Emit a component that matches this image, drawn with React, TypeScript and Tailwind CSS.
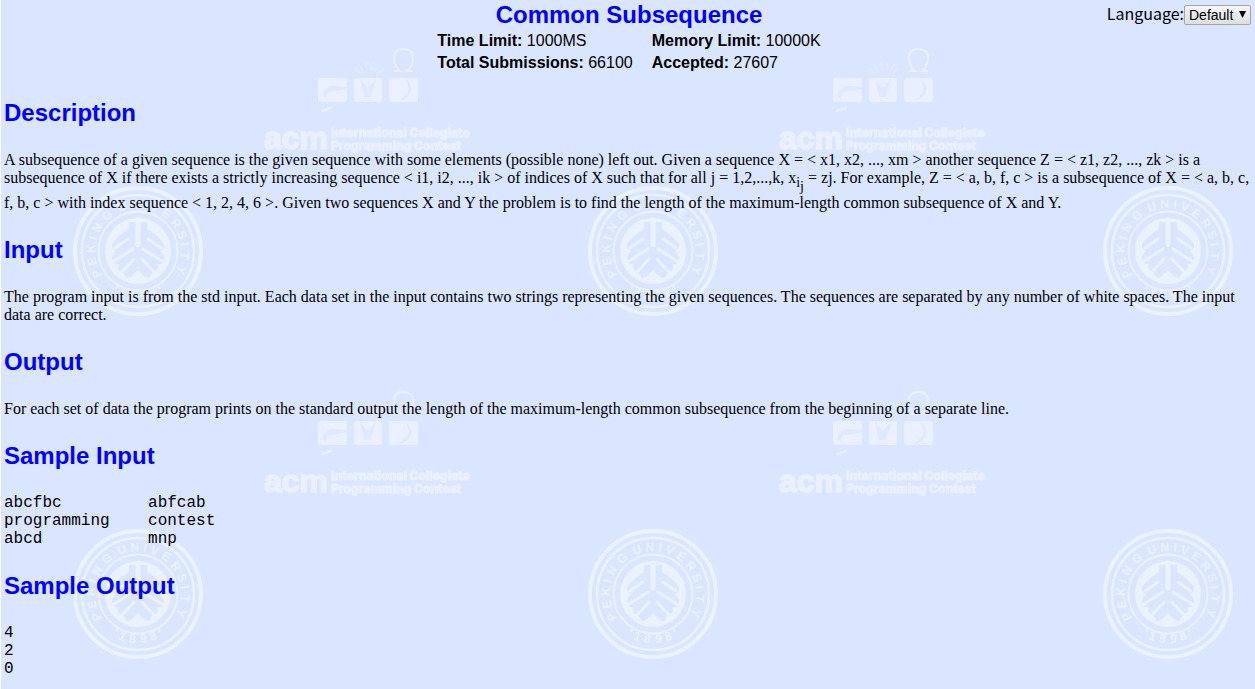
import type { ReactNode } from "react";

const sealLetters: [string, number][] = [
  ["P", -119], ["E", -103], ["K", -87], ["I", -74], ["N", -60], ["G", -41],
  ["U", -20], ["N", -4], ["I", 9], ["V", 21], ["E", 37], ["R", 54],
  ["S", 70], ["I", 82], ["T", 96], ["Y", 114],
];

const sealYear: [string, number][] = [
  ["'", 30], ["1", 20], ["8", 7], ["9", -7], ["8", -20], ["'", -30],
];

function Seal() {
  return (
    <g transform="translate(137 251)">
      <g fill="none" stroke="#ebf2ff">
        <circle r="63" strokeWidth="4" />
        <circle r="56" strokeWidth="2.4" />
        <circle r="39.5" strokeWidth="1.8" />
      </g>
      <circle r="33" fill="#ebf2ff" />
      <path
        d="M0 -29 H-9 V-22 Q-19 -16 -26 -7 Q-27 -2 -22 0 Q-28 6 -25 11 Q-23 14 -19 13 Q-22 19 -16 20 L-11 27 Q-8 28 0 19 Q8 28 11 27 L16 20 Q22 19 19 13 Q23 14 25 11 Q28 6 22 0 Q27 -2 26 -7 Q19 -16 9 -22 V-29 Z"
        fill="#dae5ff"
      />
      <g fill="none" stroke="#ebf2ff" strokeWidth="3" strokeLinecap="round">
        <path d="M0 -31 V-6" strokeWidth="5" />
        <path d="M-10 -12 L-23 -3 M-5 -2 L-24 10 M-4 8 L-15 20" />
        <path d="M10 -12 L23 -3 M5 -2 L24 10 M4 8 L15 20" />
      </g>
      <g fill="#ebf2ff" fontFamily="Liberation Sans" fontWeight="700" fontSize="12" textAnchor="middle">
        {sealLetters.map(([letter, angle]) => (
          <text key={angle} y="-43" transform={`rotate(${angle})`}>{letter}</text>
        ))}
        {sealYear.map(([letter, angle]) => (
          <text key={angle} y="49" transform={`rotate(${angle})`}>{letter}</text>
        ))}
      </g>
    </g>
  );
}

function ContestLogo() {
  return (
    <g fill="#eaf0ff">
      <rect x="317" y="78" width="29" height="24" rx="3" />
      <rect x="353" y="78" width="28" height="24" rx="3" />
      <rect x="388" y="78" width="29" height="24" rx="3" />
      <g fill="#dee8ff">
        <path d="M346 87 L334 86 Q327 85 326 89 Q321 91 322 97 L325 98 Q325 93 329 92 Q338 91 346 89 Z" />
        <path d="M359 78 L361 88 Q363 92 363 97 L370 97 Q370 92 373 88 L375 78 Q370 86 367 88 Q364 86 359 78 Z" />
        <path d="M404 78 Q413 86 409 94 Q405 100 397 101 Q404 97 407 92 Q409 86 404 78 Z" />
      </g>
      <g fill="none" stroke="#eaf0ff" strokeWidth="2" strokeLinecap="round">
        <path d="M394 71 L399 71 Q393 66 393 58 Q393 49 402 49 Q412 49 412 58 Q412 66 406 71 L411 71" />
        <path d="M354 69 L359 73 M358 64 L362 71 M365 62 L366 69 M372 63 L370 70 M378 64 L374 71 M382 69 L377 73" stroke="#e4ecff" strokeWidth="1" />
        <path d="M321 111 L330 108" />
      </g>
      <g stroke="#eaf0ff">
        <text x="263" y="149" fontFamily="Liberation Sans" fontWeight="700" fontSize="32" strokeWidth="1.6">acm</text>
        <g fontFamily="Inter" fontWeight="800" fontSize="12" strokeWidth="0.8">
          <text x="330" y="137">International Collegiate</text>
          <text x="330" y="150">Programming Contest</text>
        </g>
      </g>
    </g>
  );
}

function Watermark() {
  return (
    <svg className="absolute inset-0 -z-10 h-full w-full" aria-hidden="true">
      <defs>
        <pattern id="watermark" width="515" height="343" patternUnits="userSpaceOnUse">
          <Seal />
          <ContestLogo />
        </pattern>
      </defs>
      <rect width="100%" height="100%" fill="url(#watermark)" />
    </svg>
  );
}

function Section({ title, children }: { title: string; children: ReactNode }) {
  return (
    <section className="flex flex-col gap-6">
      <h2 className="font-['Liberation_Sans',sans-serif] text-2xl leading-7 font-bold text-[#0000ff]">{title}</h2>
      {children}
    </section>
  );
}

export default function App() {
  return (
    <div className="relative isolate ml-px min-h-screen bg-[#dae5ff] px-[3px] pt-px pb-3 font-['Liberation_Serif',serif] text-base leading-[18px] text-black">
      <Watermark />
      <div className="absolute top-[5px] right-1 flex items-start">
        <label htmlFor="language" className="font-['Noto_Sans_CJK_SC',sans-serif] text-base leading-4">Language:</label>
        <div className="relative">
          <select
            id="language"
            className="block h-5 w-[67px] appearance-none rounded-xs border border-[#a6a6a6] bg-linear-to-b from-[#f6f6f6] to-[#dedede] pl-1 font-['Liberation_Sans',sans-serif] text-sm leading-4"
          >
            <option>Default</option>
          </select>
          <svg className="pointer-events-none absolute top-[6px] right-[5px] h-[7px] w-[7px]" viewBox="0 0 7 7" aria-hidden="true">
            <path d="M0 0 H7 L3.5 7 Z" />
          </svg>
        </div>
      </div>
      <header className="flex flex-col items-center gap-[3px] pl-0.5 font-['Liberation_Sans',sans-serif]">
        <h1 className="text-2xl leading-7 font-bold text-[#0000ff]">Common Subsequence</h1>
        <table>
          <tbody>
            <tr>
              <td className="pr-[19px] pb-1"><b>Time Limit:</b> 1000MS</td>
              <td className="pb-1"><b>Memory Limit:</b> 10000K</td>
            </tr>
            <tr>
              <td className="pr-[19px]"><b>Total Submissions:</b> 66100</td>
              <td><b>Accepted:</b> 27607</td>
            </tr>
          </tbody>
        </table>
      </header>
      <main className="mt-[27px] flex flex-col gap-6">
        <Section title="Description">
          <p>
            A subsequence of a given sequence is the given sequence with some elements (possible none) left out. Given a
            sequence X = &lt; x1, x2, ..., xm &gt; another sequence Z = &lt; z1, z2, ..., zk &gt; is a subsequence of X if
            there exists a strictly increasing sequence &lt; i1, i2, ..., ik &gt; of indices of X such that for all j =
            1,2,...,k, x
            <sub className="bottom-0 align-sub text-sm leading-[14px]">
              i<sub className="bottom-0 align-sub text-sm leading-[14px]">j</sub>
            </sub>{" "}
            = zj. For example, Z = &lt; a, b, f, c &gt; is a subsequence of X = &lt; a, b, c, f, b, c &gt; with index
            sequence &lt; 1, 2, 4, 6 &gt;. Given two sequences X and Y the problem is to find the length of the
            maximum-length common subsequence of X and Y.
          </p>
        </Section>
        <Section title="Input">
          <p>
            The program input is from the std input. Each data set in the input contains two strings representing the
            given sequences. The sequences are separated by any number of white spaces. The input data are correct.
          </p>
        </Section>
        <Section title="Output">
          <p>
            For each set of data the program prints on the standard output the length of the maximum-length common
            subsequence from the beginning of a separate line.
          </p>
        </Section>
        <Section title="Sample Input">
          <pre className="font-['Liberation_Mono',monospace]">{`abcfbc         abfcab
programming    contest 
abcd           mnp`}</pre>
        </Section>
        <Section title="Sample Output">
          <pre className="font-['Liberation_Mono',monospace]">{`4
2
0`}</pre>
        </Section>
      </main>
    </div>
  );
}
